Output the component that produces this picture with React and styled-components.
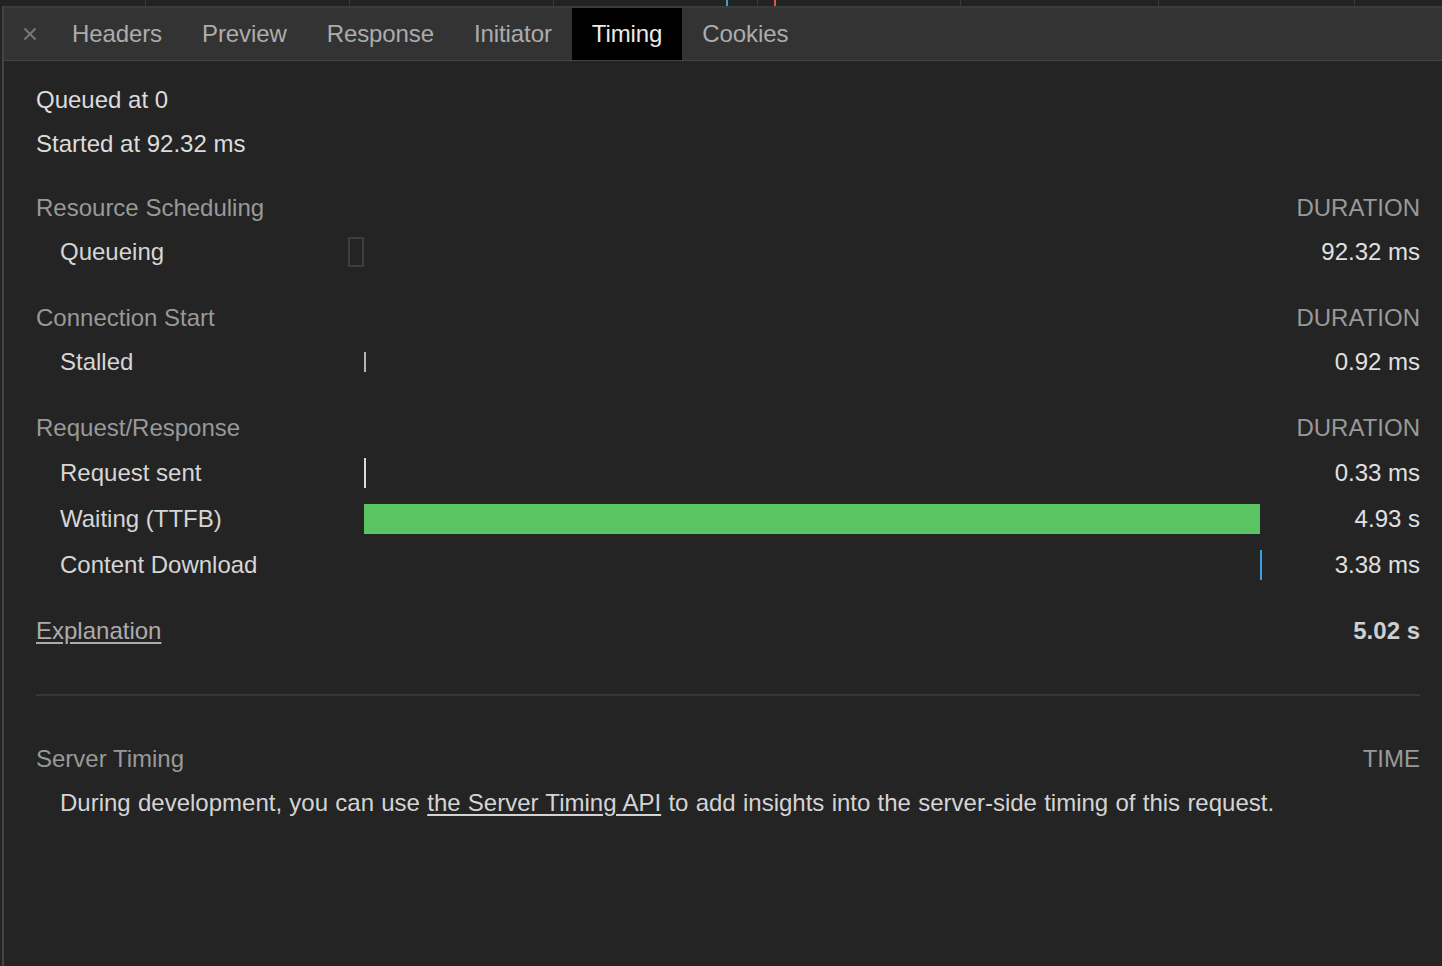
import React from "react";
import styled, { createGlobalStyle } from "styled-components";

const GlobalStyle = createGlobalStyle`
  html, body {
    margin: 0;
    padding: 0;
    background: #242424;
  }
  body {
    font-family: "Liberation Sans", Arial, Helvetica, sans-serif;
    -webkit-font-smoothing: antialiased;
  }
`;

const Page = styled.div`
  min-height: 966px;
  background: #242424;
  display: flex;
  flex-direction: column;
`;

const GridStrip = styled.div`
  position: relative;
  height: 6px;
  background: #232323;
`;

const GridLine = styled.div`
  position: absolute;
  top: 0;
  bottom: 0;
  width: ${(p) => (p.$color ? "2px" : "1px")};
  background: ${(p) => p.$color || "#3a3a3a"};
`;

const Panel = styled.div`
  flex: 1;
  margin-left: 2px;
  border-left: 2px solid #444444;
  display: flex;
  flex-direction: column;
`;

const TabBar = styled.div`
  display: flex;
  align-items: stretch;
  height: 52px;
  background: #333333;
  border-top: 2px solid #3b3b3b;
  border-bottom: 1px solid #444444;
`;

const CloseButton = styled.div`
  width: 48px;
  display: flex;
  align-items: center;
  justify-content: center;
  padding-left: 4px;
  box-sizing: border-box;
`;

const Tab = styled.div`
  display: flex;
  align-items: center;
  padding: 0 20px;
  font-size: 24px;
  letter-spacing: -0.1px;
  color: ${(p) => (p.$active ? "#ebebeb" : "#acacac")};
  background: ${(p) => (p.$active ? "#000000" : "transparent")};
`;

const Content = styled.div`
  padding: 17px 22px 0 32px;
  font-size: 24px;
`;

const SummaryLine = styled.div`
  height: 44px;
  line-height: 44px;
  color: #dcdcdc;
`;

const Section = styled.div`
  margin-top: ${(p) => p.$gap || 22}px;
`;

const Row = styled.div`
  display: grid;
  grid-template-columns: 312px 1fr 158px;
  align-items: center;
  height: ${(p) => p.$h || 44}px;
`;

const Heading = styled.div`
  color: #999999;
`;

const ColumnTitle = styled.div`
  grid-column: 3;
  text-align: right;
  color: #999999;
`;

const Label = styled.div`
  padding-left: 24px;
  color: #d6d6d6;
`;

const Timeline = styled.div`
  position: relative;
  height: 100%;
`;

const Bar = styled.div`
  position: absolute;
  top: 50%;
  transform: translateY(-50%);
  box-sizing: border-box;
  height: ${(p) => p.$h || 30}px;
  min-width: 2px;
  background: ${(p) => p.$fill || "transparent"};
  border: ${(p) => (p.$hollow ? "2px solid #3e3e3e" : "none")};
`;

const Value = styled.div`
  grid-column: 3;
  text-align: right;
  color: ${(p) => (p.$bold ? "#cfcfcf" : "#e0e0e0")};
  font-weight: ${(p) => (p.$bold ? 700 : 400)};
`;

const Link = styled.a`
  color: inherit;
  text-decoration: underline;
  text-underline-offset: 3px;
`;

const ExplainLink = styled(Link)`
  color: #acacac;
`;

const Divider = styled.div`
  height: 2px;
  background: #363636;
  margin: 41px 0 41px;
`;

const Description = styled.div`
  height: 44px;
  line-height: 44px;
  padding-left: 24px;
  color: #d4d4d4;
  word-spacing: 0.6px;
`;

const gridLines = [145, 349, 553, 757, 960, 1158, 1354];

// start / end are percentages of the waterfall width
const sections = [
  {
    title: "Resource Scheduling",
    gap: 20,
    rows: [{ label: "Queueing", start: 0, end: 1.75, value: "92.32 ms", hollow: true }],
  },
  {
    title: "Connection Start",
    rows: [{ label: "Stalled", start: 1.75, end: 1.77, value: "0.92 ms", fill: "#b4b4b4", h: 20 }],
  },
  {
    title: "Request/Response",
    rowH: 46,
    rows: [
      { label: "Request sent", start: 1.75, end: 1.76, value: "0.33 ms", fill: "#d8d8d8" },
      { label: "Waiting (TTFB)", start: 1.75, end: 99.78, value: "4.93 s", fill: "#5ac463" },
      { label: "Content Download", start: 99.78, end: 99.85, value: "3.38 ms", fill: "#3c9fe2" },
    ],
  },
];

const CloseIcon = () => (
  <svg width="14" height="14" viewBox="0 0 14 14">
    <path d="M1.5 1.5 L12.5 12.5 M12.5 1.5 L1.5 12.5" stroke="#787878" strokeWidth="2" />
  </svg>
);

const tabs = ["Headers", "Preview", "Response", "Initiator", "Timing", "Cookies"];

export default function App() {
  return (
    <Page>
      <GlobalStyle />
      <GridStrip>
        {gridLines.map((x) => (
          <GridLine key={x} style={{ left: x }} />
        ))}
        <GridLine $color="#3d9de0" style={{ left: 726 }} />
        <GridLine $color="#e0535a" style={{ left: 774 }} />
      </GridStrip>
      <Panel>
        <TabBar>
          <CloseButton>
            <CloseIcon />
          </CloseButton>
          {tabs.map((t) => (
            <Tab key={t} $active={t === "Timing"}>
              {t}
            </Tab>
          ))}
        </TabBar>
        <Content>
          <SummaryLine>Queued at 0</SummaryLine>
          <SummaryLine>Started at 92.32 ms</SummaryLine>

          {sections.map((s) => (
            <Section key={s.title} $gap={s.gap}>
              <Row>
                <Heading>{s.title}</Heading>
                <ColumnTitle>DURATION</ColumnTitle>
              </Row>
              {s.rows.map((r) => (
                <Row key={r.label} $h={s.rowH}>
                  <Label>{r.label}</Label>
                  <Timeline>
                    <Bar
                      $hollow={r.hollow}
                      $fill={r.fill}
                      $h={r.h}
                      style={{ left: `${r.start}%`, width: `${r.end - r.start}%` }}
                    />
                  </Timeline>
                  <Value>{r.value}</Value>
                </Row>
              ))}
            </Section>
          ))}

          <Section $gap={21}>
            <Row>
              <div>
                <ExplainLink>Explanation</ExplainLink>
              </div>
              <Value $bold>5.02 s</Value>
            </Row>
          </Section>

          <Divider />

          <Row>
            <Heading>Server Timing</Heading>
            <ColumnTitle>TIME</ColumnTitle>
          </Row>
          <Description>
            During development, you can use <Link>the Server Timing API</Link> to add insights into the
            server-side timing of this request.
          </Description>
        </Content>
      </Panel>
    </Page>
  );
}
